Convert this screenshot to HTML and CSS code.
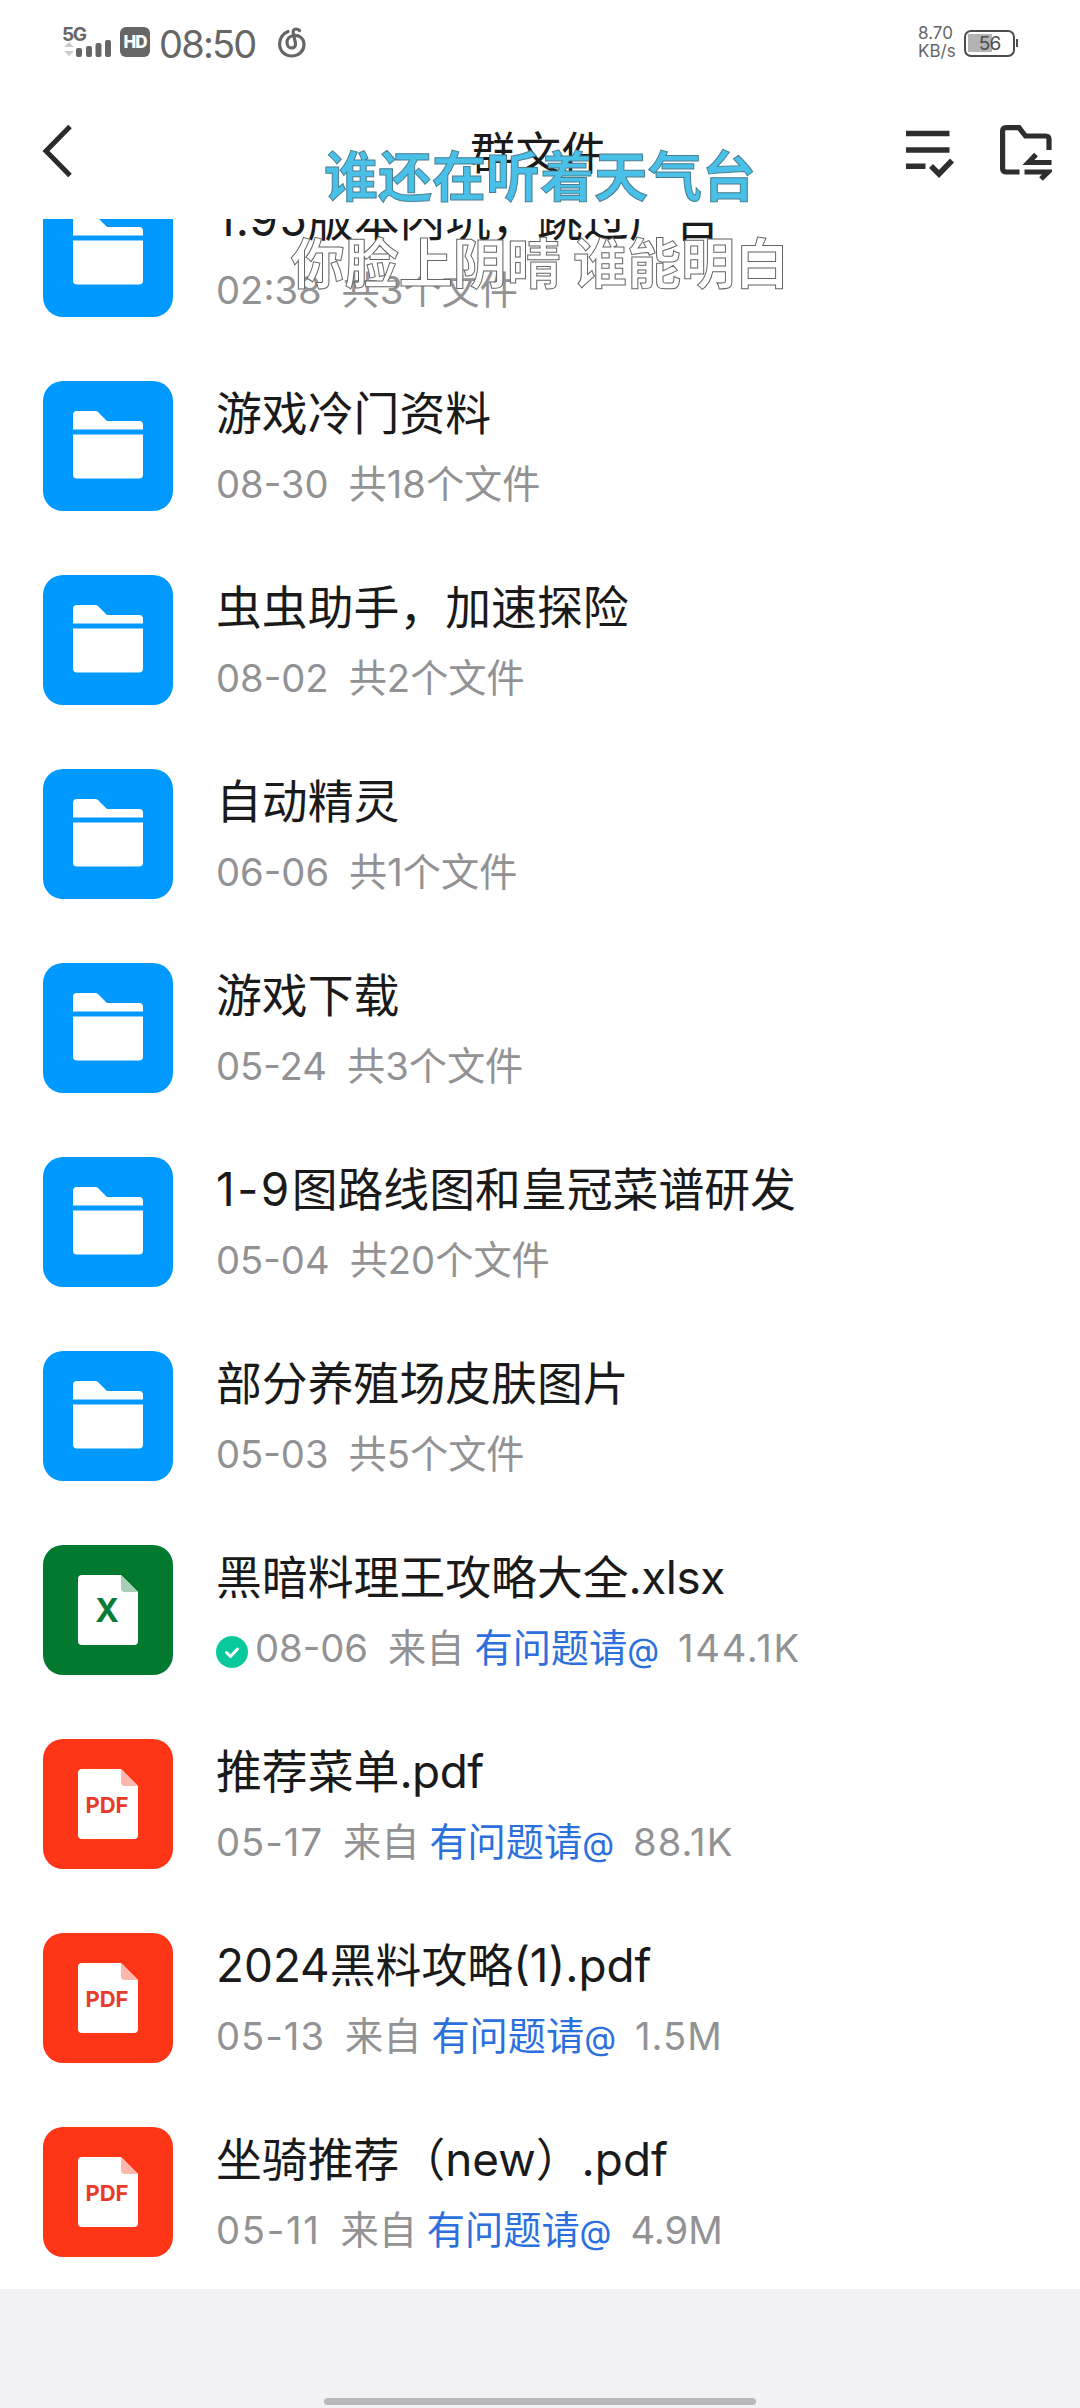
FILE: index.html
```html
<!DOCTYPE html>
<html lang="zh-CN">
<head>
<meta charset="utf-8">
<title>群文件</title>
<link rel="stylesheet" href="styles.css">
</head>
<body>
<svg class="defs" width="0" height="0">
  <symbol id="folder" viewBox="0 0 70 68">
    <path fill="#fff" d="M0 18.500V4a4 4 0 0 1 4-4H22.500a3.500 3.500 0 0 1 2.500 1L34 10H66a4 4 0 0 1 4 4V18.500Z"/>
    <path fill="#fff" d="M0 23.500H70V63.500a4 4 0 0 1-4 4H4a4 4 0 0 1-4-4Z"/>
  </symbol>
  <symbol id="sheet" viewBox="0 0 60 70">
    <path fill="#fff" d="M4 0H43L60 17V66a4 4 0 0 1-4 4H4a4 4 0 0 1-4-4V4a4 4 0 0 1 4-4Z"/>
    <path class="fold" d="M43 0L60 17H47a4 4 0 0 1-4-4Z"/>
  </symbol>
</svg>
<div class="screen">
  <header class="status">
    <div class="signal">
      <span class="net">5G</span>
      <svg class="bars" width="48" height="30" viewBox="0 0 48 30">
        <path fill="#ccc" d="M0 19L5 14L10 19ZM0 23H10L5 28Z"/>
        <g fill="#666"><rect x="12" y="20" width="6" height="9" rx="2"/><rect x="22" y="18" width="6" height="11" rx="2"/><rect x="31.500" y="15" width="6" height="14" rx="2"/><rect x="41" y="12" width="6" height="17" rx="2"/></g>
      </svg>
    </div>
    <span class="hd">HD</span>
    <span class="clock">08:50</span>
    <svg class="music" width="28" height="31" viewBox="0 0 28 31" fill="none" stroke="#666" stroke-width="3.200" stroke-linecap="round">
      <path d="M10 4.500C4 7 1.600 12 1.600 17C1.600 24 7 29 13.500 29C21 29 26 24 26 17.500C26 11 21 8 16 8.500C11 9 9 12.500 9 15.500C9 19 11 21 13.500 21C16.500 21 18 18.500 17.500 16L15.200 6.500C14.600 3.500 16 2 18 2C19.500 2 20.500 2.500 21.500 3.500"/>
    </svg>
    <div class="rate"><span>8.70</span><span>KB/s</span></div>
    <div class="battery"><span>56</span></div>
  </header>

  <nav class="bar">
    <svg class="back" width="30" height="54" viewBox="0 0 30 54" fill="none" stroke="#2b2b2e" stroke-width="5"><path d="M28 2.500L4 27L28 51.500"/></svg>
    <h1>群文件</h1>
    <svg class="select" width="48" height="48" viewBox="0 0 48 48" fill="none" stroke="#2e2e30" stroke-width="5.600">
      <path d="M0 3.500H43.500M0 20H43.500M0 36.200H19.500M25 36L33 44L46 30.500"/>
    </svg>
    <svg class="transfer" width="52" height="56" viewBox="0 0 52 56" fill="none" stroke="#2e2e30" stroke-width="5.200">
      <path d="M19.500 47H6.600Q2.600 47 2.600 43.500V6Q2.600 2.600 6 2.600H19L25.500 11H45.500Q49 11 49 14.500V25M51.500 37.500H28.500L36 29.500M24.500 47H48L41 54"/>
    </svg>
  </nav>

  <main class="list">
    <article class="row"><div class="tile blue"><svg><use href="#folder"/></svg></div><div class="info"><h2><i class="wide">1.95</i>版本内坑，跳过广告</h2><p><i>02:38</i><b></b>共<i>3</i>个文件</p></div></article>
    <article class="row"><div class="tile blue"><svg><use href="#folder"/></svg></div><div class="info"><h2>游戏冷门资料</h2><p><i>08-30</i><b></b>共<i>18</i>个文件</p></div></article>
    <article class="row"><div class="tile blue"><svg><use href="#folder"/></svg></div><div class="info"><h2>虫虫助手，加速探险</h2><p><i>08-02</i><b></b>共<i>2</i>个文件</p></div></article>
    <article class="row"><div class="tile blue"><svg><use href="#folder"/></svg></div><div class="info"><h2>自动精灵</h2><p><i>06-06</i><b></b>共<i>1</i>个文件</p></div></article>
    <article class="row"><div class="tile blue"><svg><use href="#folder"/></svg></div><div class="info"><h2>游戏下载</h2><p><i>05-24</i><b></b>共<i>3</i>个文件</p></div></article>
    <article class="row"><div class="tile blue"><svg><use href="#folder"/></svg></div><div class="info"><h2><i class="wider">1-9</i>图路线图和皇冠菜谱研发</h2><p><i>05-04</i><b></b>共<i>20</i>个文件</p></div></article>
    <article class="row"><div class="tile blue"><svg><use href="#folder"/></svg></div><div class="info"><h2>部分养殖场皮肤图片</h2><p><i>05-03</i><b></b>共<i>5</i>个文件</p></div></article>
    <article class="row"><div class="tile green"><svg><use href="#sheet"/></svg><span class="kind">X</span></div><div class="info"><h2>黑暗料理王攻略大全<i class="ext">.xlsx</i></h2><p><svg class="ok" width="32" height="32" viewBox="0 0 32 32"><circle cx="16" cy="16" r="16" fill="#08c99b"/><path d="M10.500 16.500L14.500 20.500L21.500 13" fill="none" stroke="#fff" stroke-width="3" stroke-linecap="round" stroke-linejoin="round"/></svg><i>08-06</i><b></b>来自<s></s><a>有问题请<i class="at">@</i></a><b></b><i class="wider">144.1K</i></p></div></article>
    <article class="row"><div class="tile red"><svg><use href="#sheet"/></svg><span class="kind">PDF</span></div><div class="info"><h2>推荐菜单<i class="ext">.pdf</i></h2><p><i class="wide">05-17</i><b></b>来自<s></s><a>有问题请<i class="at">@</i></a><b></b><i class="wide">88.1K</i></p></div></article>
    <article class="row"><div class="tile red"><svg><use href="#sheet"/></svg><span class="kind">PDF</span></div><div class="info"><h2><i>2024</i>黑料攻略<i>(1).pdf</i></h2><p><i class="wide">05-13</i><b></b>来自<s></s><a>有问题请<i class="at">@</i></a><b></b><i class="wide">1.5M</i></p></div></article>
    <article class="row"><div class="tile red"><svg><use href="#sheet"/></svg><span class="kind">PDF</span></div><div class="info"><h2>坐骑推荐（<i>new</i>）<i>.pdf</i></h2><p><i class="wider">05-11</i><b></b>来自<s></s><a>有问题请<i class="at">@</i></a><b></b><i>4.9M</i></p></div></article>
  </main>

  <footer class="bottom"><div class="home"></div></footer>

  <div class="lyrics"><p class="now">谁还在听着天气台</p><p class="next">你脸上阴晴 谁能明白</p></div>
</div>
</body>
</html>
```
FILE: styles.css
```css
* { box-sizing: border-box; margin: 0; padding: 0; }
body { background: #fff; font-family: Inter, "Noto Sans CJK SC", sans-serif; color: #1a1a1a; }
i { font-style: normal; }
.defs { display: block; height: 0; }
.screen { position: relative; width: 1080px; height: 2408px; display: flex; flex-direction: column; overflow: hidden; }

.status { height: 86px; flex: none; display: flex; align-items: flex-start; padding-left: 62px; color: #666; }
.signal { width: 58px; height: 86px; padding-top: 25px; display: flex; flex-direction: column; }
.net { height: 3px; font-size: 19px; line-height: 20px; font-weight: 700; letter-spacing: -1.500px; }
.bars { display: block; margin-left: 2px; }
.hd { width: 30px; height: 30px; margin-top: 27px; border-radius: 6px; background: #666; color: #fff; font-size: 17px; line-height: 30px; font-weight: 800; text-align: center; letter-spacing: -1px; }
.clock { width: 98px; margin: 22px 0 0 9px; font-size: 38px; line-height: 45px; letter-spacing: -1.800px; white-space: nowrap; }
.music { margin: 27px 0 0 21px; }
.rate { width: 38px; margin: 24px 0 0 612px; display: flex; flex-direction: column; font-size: 17px; line-height: 18px; white-space: nowrap; }
.battery { position: relative; width: 51px; height: 27px; margin: 30px 0 0 8px; border: 2.500px solid #4d4d4d; border-radius: 7px; background: linear-gradient(90deg, #b3b3b3 24px, #fff 24px) 2px 2px / 43px 18px no-repeat; text-align: center; }
.battery::after { content: ""; position: absolute; right: -5px; top: 7px; width: 2px; height: 8px; background: #4d4d4d; }
.battery span { display: block; font-size: 19px; line-height: 23px; font-weight: 400; letter-spacing: -1px; color: #4d4d4d; }

.bar { height: 133px; flex: none; display: flex; align-items: flex-start; padding: 0 0 0 42px; }
.back { margin-top: 38px; }
.bar h1 { width: 137px; margin: 38px 0 0 398px; font-size: 45.600px; line-height: 60px; font-weight: 400; white-space: nowrap; }
.select { margin: 44px 0 0 299px; }
.transfer { margin: 39px 0 0 46px; }

.list { height: 2070px; flex: none; overflow: hidden; display: flex; flex-direction: column; justify-content: flex-end; gap: 64px; padding-bottom: 32px; }
.row { height: 130px; flex: none; display: flex; gap: 43px; padding-left: 43px; }
.tile { position: relative; width: 130px; height: 130px; border-radius: 20px; display: flex; justify-content: center; padding-top: 30px; }
.tile svg { width: 60px; height: 70px; }
.blue { background: #0099ff; }
.blue svg { width: 70px; height: 68px; }
.green { background: #03782f; }
.red { background: #ff3518; }
.green svg { fill: #a6d0b5; }
.red svg { fill: #ffb7ad; }
.kind { position: absolute; left: 0; right: 2px; top: 49px; text-align: center; font-size: 22px; line-height: 34px; font-weight: 700; color: #e93b28; }
.green .kind { color: #067c38; font-size: 32px; }
.info { padding-top: 3px; white-space: nowrap; }
.info h2 { font-size: 45.850px; line-height: 60px; font-weight: 400; }
.info p { margin-top: 15px; font-size: 38.200px; line-height: 50px; font-weight: 400; color: #929294; }
.info b { display: inline-block; width: 20px; }
.info s { display: inline-block; width: 10px; }
.info a { color: #2b70dd; }
.wide { letter-spacing: 1px; }
.wider { letter-spacing: 1.700px; }
h2 .wider { letter-spacing: 2.500px; }
.ext { letter-spacing: -0.500px; }
.info .at { font-size: 33px; letter-spacing: -1px; }
.ok { vertical-align: -6px; margin-right: 7px; }

.bottom { flex: 1; background: #f2f1f6; display: flex; justify-content: center; align-items: flex-end; padding-bottom: 3px; }
.home { width: 432px; height: 7px; border-radius: 4px; background: #b9b9bb; }

.lyrics { position: absolute; left: 0; right: 0; top: 130px; text-align: center; font-family: "Noto Sans CJK SC", sans-serif; font-weight: 700; font-size: 54px; line-height: 87px; white-space: nowrap; }
.now { color: #48c0e8; -webkit-text-stroke: 1px #4a7f92; }
.next { color: #fff; -webkit-text-stroke: 1px #666; }
```
